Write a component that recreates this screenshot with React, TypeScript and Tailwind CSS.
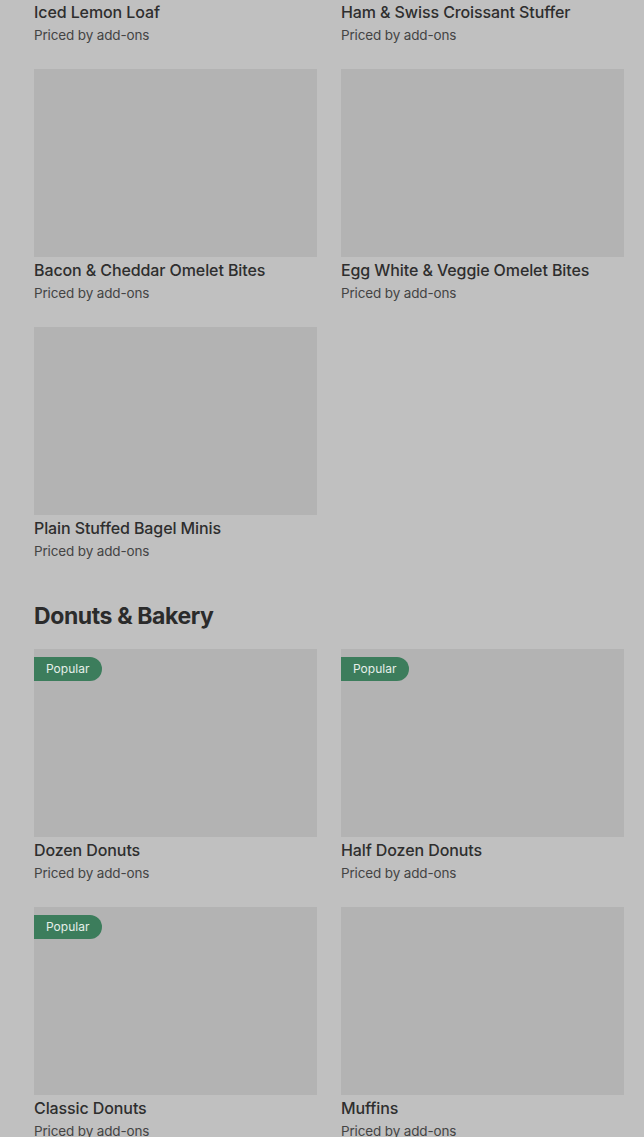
const breakfast = [
  "Iced Lemon Loaf",
  "Ham & Swiss Croissant Stuffer",
  "Bacon & Cheddar Omelet Bites",
  "Egg White & Veggie Omelet Bites",
  "Plain Stuffed Bagel Minis",
];

const bakery = [
  { name: "Dozen Donuts", popular: true },
  { name: "Half Dozen Donuts", popular: true },
  { name: "Classic Donuts", popular: true },
  { name: "Muffins", popular: false },
];

function ItemCard({ name, popular }: { name: string; popular?: boolean }) {
  return (
    <div className="flex flex-col">
      <div className="relative h-[188px] bg-[#b3b3b3]">
        {popular && (
          <span className="absolute left-0 top-[8px] h-[24px] pl-[12px] pr-[13px] flex items-center rounded-r-full bg-[#3c7d5c] text-[12px] text-[#e6efe9]">
            Popular
          </span>
        )}
      </div>
      <p className="mt-[1px] text-[16px] leading-6 font-medium tracking-[-0.1px] text-[#2e2e2e]">{name}</p>
      <p className="mt-[1px] text-[13.5px] leading-5 tracking-[-0.15px] text-[#444]">Priced by add-ons</p>
    </div>
  );
}

export default function App() {
  return (
    <div
      className="h-[1137px] overflow-hidden bg-[#c0c0c0]"
      style={{ fontFamily: "Inter, 'Noto Sans', sans-serif" }}
    >
      <div className="mt-[-189px] pl-[34px] pr-[20px]">
        {/* BREAKFAST ITEMS */}
        <div className="grid grid-cols-2 gap-x-6 gap-y-6">
          {breakfast.map((item) => (
            <ItemCard key={item} name={item} />
          ))}
        </div>

        {/* DONUTS & BAKERY */}
        <h2 className="mt-[39px] mb-[17px] text-[23px] leading-8 font-bold tracking-[-0.4px] text-[#2b2b2b]">
          Donuts &amp; Bakery
        </h2>
        <div className="grid grid-cols-2 gap-x-6 gap-y-6">
          {bakery.map((item) => (
            <ItemCard key={item.name} name={item.name} popular={item.popular} />
          ))}
        </div>
      </div>
    </div>
  );
}
